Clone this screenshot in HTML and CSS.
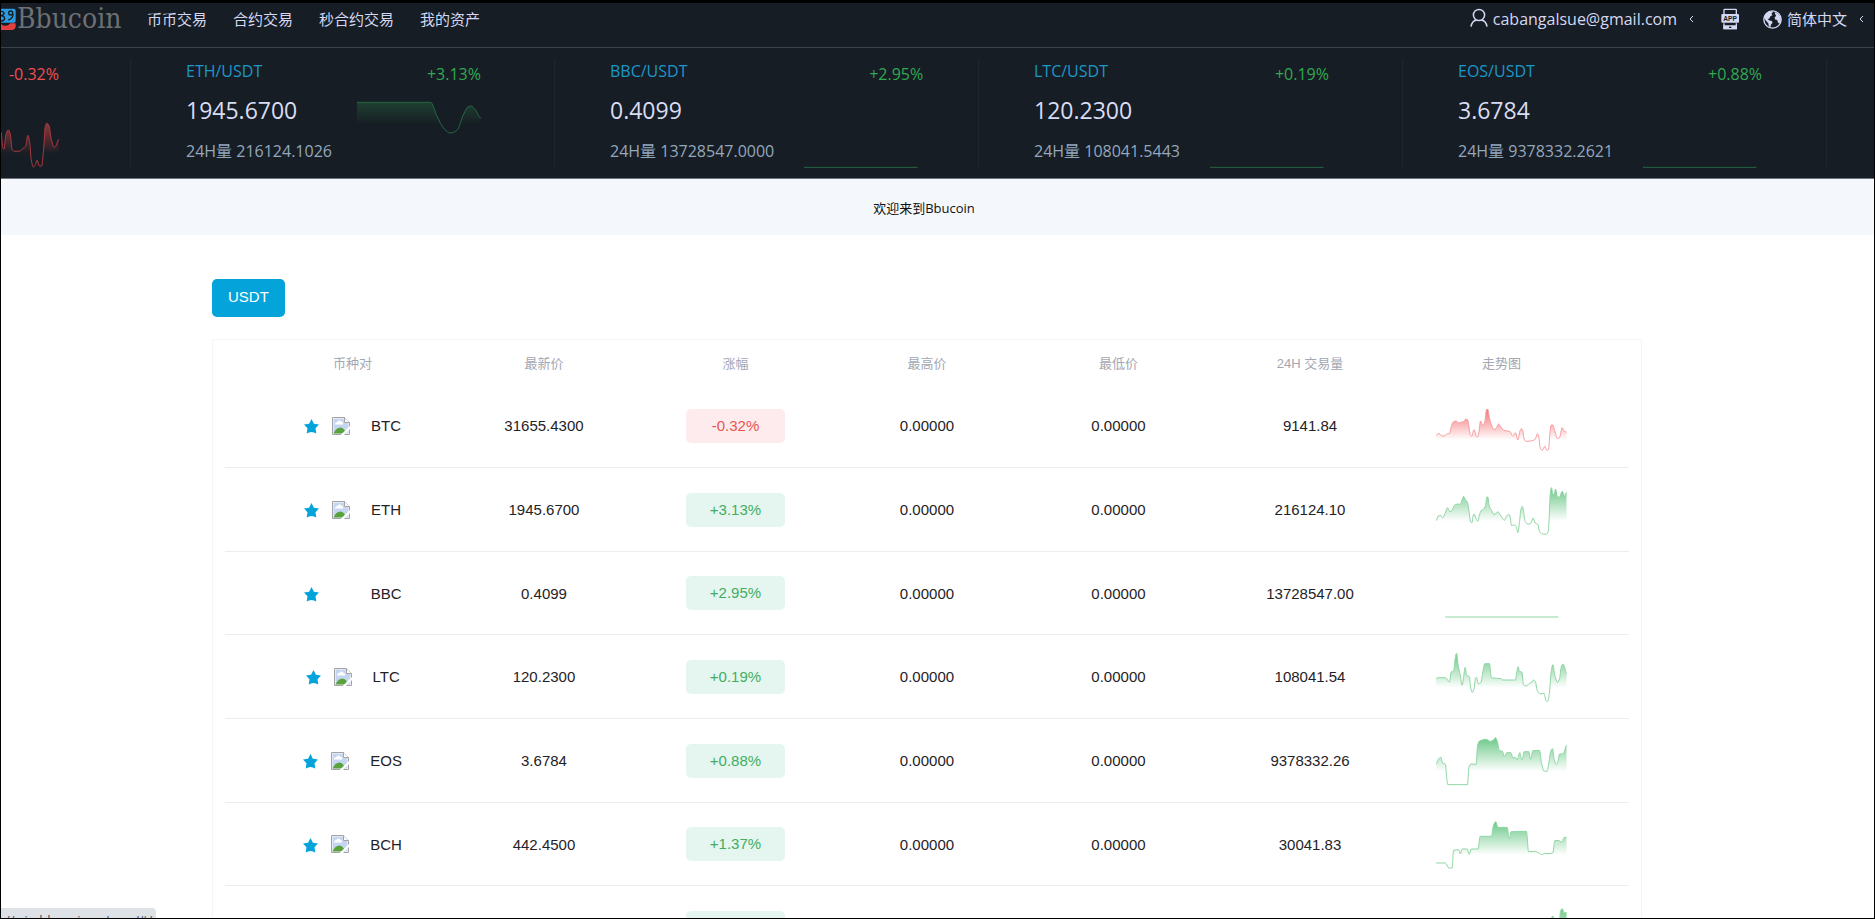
FILE: index.html
```html
<!DOCTYPE html>
<html lang="zh-CN">
<head>
<meta charset="utf-8">
<title>Bbucoin</title>
<link rel="stylesheet" href="styles.css">
</head>
<body>
<div class="page">
  <header class="topbar">
    <a class="brand" href="#">
      <svg class="brand-mark" viewBox="0 0 45 66" aria-hidden="true">
        <path d="M0 2H38Q44 2 44 9V38Q44 44 38 44H0Z" fill="#2a9be0"/>
        <path d="M0 10Q9 10 9 16Q9 22 0 23Q11 25 11 32Q10 39 0 39" fill="none" stroke="#171d24" stroke-width="4"/>
        <circle cx="29" cy="15" r="6" fill="none" stroke="#171d24" stroke-width="4"/>
        <path d="M36 18Q37 31 22 36" fill="none" stroke="#171d24" stroke-width="4"/>
        <path d="M0 48Q16 60 28 46H44V56Q42 66 30 66H0Z" fill="#e2403f"/>
      </svg>
      <span class="brand-name">Bbucoin</span>
    </a>
    <nav class="menu">
      <a href="#">币币交易</a>
      <a href="#">合约交易</a>
      <a href="#">秒合约交易</a>
      <a href="#">我的资产</a>
    </nav>
    <div class="tools">
      <a class="account" href="#">
        <svg class="icon-user" viewBox="0 0 18 20" fill="none" stroke="currentColor" stroke-width="1.5" aria-hidden="true">
          <circle cx="9" cy="7" r="5.6"/><path d="M1 18.6Q2 12.8 6.6 12M17 18.6Q16 12.8 11.4 12"/>
        </svg>
        <span class="email">cabangalsue@gmail.com</span>
        <svg class="caret" viewBox="0 0 5 8" fill="none" stroke="currentColor" aria-hidden="true"><path d="M4 1L1 4L4 7"/></svg>
      </a>
      <a class="app" href="#" aria-label="APP">
        <svg class="icon-app" viewBox="0 0 54 66" aria-hidden="true">
          <path d="M9 18V6Q9 4 11 4H44Q46 4 46 6V18" fill="none" stroke="#d4d8f2" stroke-width="4"/>
          <path d="M9 46V62H46V46" fill="none" stroke="#d4d8f2" stroke-width="4"/>
          <path d="M7 52H48V62Q48 64 46 64H9Q7 64 7 62Z" fill="#d4d8f2"/>
          <rect x="1" y="18" width="53" height="26" rx="3" fill="#d4d8f2"/>
          <text x="27" y="38" text-anchor="middle" class="app-label">APP</text>
          <rect x="24" y="56" width="7" height="4" fill="#171d24"/>
        </svg>
      </a>
      <a class="lang" href="#">
        <svg class="icon-globe" viewBox="0 0 18 18" aria-hidden="true">
          <circle cx="9" cy="9" r="8.2" fill="#171d24" stroke="#d4d8f2" stroke-width="1.3"/>
          <path d="M2 4.5Q4 1.500 8 1L9.500 2L8 3.500L9 5L7 6L6 8L4.500 8.500L6 10L8.500 10.500L9 12L7.500 14L7 16.500Q5 15.500 5 12.500L3 10.500L1.500 8ZM11 2Q15 3 16.500 6.500L17 10L15.500 13L14 11.500L13.500 9.500L11.500 9L11 7L12.500 5.500L11.500 4Z" fill="#d4d8f2"/>
        </svg>
        <span>简体中文</span>
        <svg class="caret" viewBox="0 0 5 8" fill="none" stroke="currentColor" aria-hidden="true"><path d="M4 1L1 4L4 7"/></svg>
      </a>
    </div>
  </header>

  <section class="ticker">
    <article class="tick tick-first">
      <div class="tick-side"><span class="pct down">-0.32%</span><svg class="tick-chart" data-series="tickBtc" data-tone="down-dark" viewBox="0 0 177 210"></svg></div>
    </article>
    <article class="tick">
      <div class="tick-info"><span class="pair">ETH/USDT</span><strong class="last">1945.6700</strong><span class="vol">24H量 216124.1026</span></div>
      <div class="tick-side"><span class="pct">+3.13%</span><svg class="tick-chart" data-series="tickEth" data-tone="up-dark" viewBox="0 0 372 210"></svg></div>
    </article>
    <article class="tick">
      <div class="tick-info"><span class="pair">BBC/USDT</span><strong class="last">0.4099</strong><span class="vol">24H量 13728547.0000</span></div>
      <div class="tick-side"><span class="pct">+2.95%</span><svg class="tick-chart" data-series="tickFlat" data-tone="up-dark" viewBox="0 0 372 210"></svg></div>
    </article>
    <article class="tick">
      <div class="tick-info"><span class="pair">LTC/USDT</span><strong class="last">120.2300</strong><span class="vol">24H量 108041.5443</span></div>
      <div class="tick-side"><span class="pct">+0.19%</span><svg class="tick-chart" data-series="tickFlat" data-tone="up-dark" viewBox="0 0 372 210"></svg></div>
    </article>
    <article class="tick">
      <div class="tick-info"><span class="pair">EOS/USDT</span><strong class="last">3.6784</strong><span class="vol">24H量 9378332.2621</span></div>
      <div class="tick-side"><span class="pct">+0.88%</span><svg class="tick-chart" data-series="tickFlat" data-tone="up-dark" viewBox="0 0 372 210"></svg></div>
    </article>
  </section>

  <p class="notice">欢迎来到Bbucoin</p>

  <main class="market">
    <button class="tab" type="button">USDT</button>
    <div class="panel">
      <table class="coins">
        <colgroup><col class="col-edge"><col class="col"><col class="col"><col class="col"><col class="col"><col class="col"><col class="col-edge"></colgroup>
        <thead>
          <tr><th>币种对</th><th>最新价</th><th>涨幅</th><th>最高价</th><th>最低价</th><th>24H 交易量</th><th>走势图</th></tr>
        </thead>
        <tbody id="rows"></tbody>
      </table>
    </div>
  </main>
  <div class="status">//win.bbucoin.cc/wap/#/</div>
</div>

<svg class="defs" aria-hidden="true">
  <defs>
    <symbol id="star" viewBox="0 0 15 15"><path d="M7.500 0L9.900 4.700L15 5.500L11.500 9.200L12.300 14.600Q7.500 11.600 2.700 14.600L3.500 9.200L0 5.500L5.100 4.700Z" fill="#04a4da"/></symbol>
    <symbol id="broken" viewBox="0 0 18 18">
      <path d="M.5 .5H12.500L17.500 5.500V17.500H.5Z" fill="#fff" stroke="#a3a3a3"/>
      <path d="M1.500 1.500H12V6H16.500V16.500H1.500Z" fill="#c6d6f2"/>
      <path d="M3 7.500Q3 5 5.500 5Q7 2.500 9 4.500Q11.500 5 11 7.500Z" fill="#fff"/>
      <path d="M1.500 16.500Q4 10.500 8.500 10.500Q12.500 11 14 16.500Z" fill="#5aa33c"/>
      <path d="M12.500 .5V5.500H17.500" fill="#fff" stroke="#a3a3a3"/>
      <path d="M8.500 18L18 9V12L12 18Z" fill="#fff"/>
    </symbol>
    <linearGradient id="g-up" x1="0" y1="0" x2="0" y2="1"><stop offset="0" stop-color="#6cc888"/><stop offset="0.72" stop-color="#6cc888" stop-opacity="0"/></linearGradient>
    <linearGradient id="g-down" x1="0" y1="0" x2="0" y2="1"><stop offset="0" stop-color="#f57478"/><stop offset="0.75" stop-color="#f57478" stop-opacity="0"/></linearGradient>
    <linearGradient id="g-up-dark" x1="0" y1="0" x2="0" y2="1"><stop offset="0" stop-color="#2f9350" stop-opacity="0.3"/><stop offset="0.72" stop-color="#2f9350" stop-opacity="0"/></linearGradient>
    <linearGradient id="g-down-dark" x1="0" y1="0" x2="0" y2="1"><stop offset="0" stop-color="#e04848" stop-opacity="0.6"/><stop offset="0.7" stop-color="#e04848" stop-opacity="0"/></linearGradient>
  </defs>
</svg>
<script src="script.js"></script>
</body>
</html>
```
FILE: styles.css
```css
* { box-sizing: border-box; }

body {
  margin: 0;
  background: #000;
  font-family: "Liberation Sans", "Noto Sans CJK SC", sans-serif;
  font-size: 15px;
  color: #1f2226;
}

a { color: inherit; text-decoration: none; }
svg { display: block; flex: none; }
.defs { position: absolute; width: 0; height: 0; }

.page {
  position: relative;
  height: 100vh;
  overflow: hidden;
  border: 1px solid #000;
  border-top-width: 3px;
  background: #fff;
}

.topbar {
  display: flex;
  align-items: flex-start;
  height: 45px;
  background: #171d24;
  border-bottom: 1px solid #3b424b;
  color: #d4d8f2;
  font-family: "Open Sans", "Noto Sans CJK SC", sans-serif;
  line-height: 32px;
}

.brand { display: flex; align-items: center; gap: 1px; width: 123px; height: 32px; }
.brand-mark { width: 15px; height: 22px; }
.brand-name {
  font-family: "DejaVu Serif Condensed", "DejaVu Serif", serif;
  font-size: 28px;
  color: #6d7074;
}

.menu { display: flex; gap: 26px; margin-left: 23px; }

.tools { display: flex; margin-left: auto; padding-right: 10px; }
.account, .lang { display: flex; align-items: center; height: 32px; gap: 5px; }
.email { font-size: 16px; }
.caret { width: 5px; height: 8px; margin-left: 7px; }
.icon-user { width: 18px; height: 20px; margin-bottom: 2px; }
.app { display: flex; align-items: center; height: 32px; margin: 0 24px 0 27px; }
.icon-app { width: 18px; height: 22px; }
.app-label { font-family: "Liberation Sans", sans-serif; font-size: 20px; font-weight: 700; fill: #171d24; }
.icon-globe { width: 19px; height: 19px; }

.ticker {
  display: flex;
  overflow: hidden;
  padding: 11px 0;
  background: #171d24;
  border-bottom: 1px solid #6d7278;
  font-family: "Open Sans", "Noto Sans CJK SC", sans-serif;
  font-size: 16px;
}
.tick {
  display: flex;
  flex: none;
  gap: 25px;
  width: 424px;
  height: 108px;
  padding-left: 55px;
  border-right: 1px solid #20262d;
}
.tick-first { width: 130px; padding-left: 0; }
.tick-info { display: flex; flex-direction: column; white-space: nowrap; }
.pair { line-height: 24px; color: #1b97c8; }
.last { font-size: 23px; font-weight: 400; line-height: 54px; color: #d9dcf5; }
.vol { line-height: 28px; color: #93a7bd; }
.tick-side { display: flex; flex-direction: column; }
.pct { align-self: flex-end; line-height: 30px; margin-bottom: 10px; color: #31a852; }
.pct.down { color: #f24e50; }
.tick-chart { width: 124px; height: 70px; }
.tick-first .tick-chart { width: 58px; }

.notice {
  margin: 0;
  padding: 2px 27px 0 0;
  background: #f4f8fc;
  font-family: "Open Sans", "Noto Sans CJK SC", sans-serif;
  font-size: 13px;
  line-height: 54px;
  text-align: center;
  color: #111;
}

.market { padding: 44px 232px 0 211px; }
.tab {
  display: block;
  height: 38px;
  padding: 0 16px 3px;
  border: 0;
  border-radius: 5px;
  background: #04a4da;
  font: inherit;
  color: #fff;
}
.panel { margin-top: 22px; padding: 0 12px; border: 1px solid #f4f5f7; }

.coins { width: 100%; table-layout: fixed; border-collapse: separate; border-spacing: 0; }
.col-edge { width: 15.9%; }
.coins th { height: 44px; padding: 1px 0 0; font-size: 13px; font-weight: 400; color: #a3a7b4; }
.coins td { height: 84px; padding: 0; border-bottom: 1px solid #ebedef; text-align: center; }
.coins tr:nth-child(3n) td { height: 83px; }
.coins th:first-child, .coins td:first-child { padding-left: 32px; }
.coins th:last-child, .coins td:last-child { padding-right: 32px; }

.coin { display: flex; align-items: center; justify-content: center; }
.star { width: 15px; height: 15px; margin: 2px 13px 0 0; }
.logo { width: 18px; height: 18px; margin-right: 21px; }
.pill {
  display: block;
  width: 99px;
  margin: 0 auto;
  min-height: 34px;
  border-radius: 5px;
  background: #e5f6f0;
  line-height: 34px;
  color: #42ad62;
}
.pill.down { background: #feebed; color: #e95450; }
.spark { width: 131px; height: 50px; margin: 0 auto; }

.status {
  position: absolute;
  left: 0;
  bottom: 0;
  height: 10px;
  padding: 0 4px;
  overflow: hidden;
  border-radius: 0 4px 0 0;
  background: #dee1e6;
  font-family: "Open Sans", sans-serif;
  font-size: 13px;
  line-height: 24px;
  color: #4c5156;
}
```
FILE: script.js
```js
// Chart points as x,y pairs; y grows downwards.
const series = {
  BTC: "0,102 8,97 16,104 24,105 34,98 41,96 46,75 52,62 60,60 68,66 76,63 82,62 88,55 94,56 98,75 102,100 107,106 112,88 114,86 120,106 124,108 128,95 133,60 140,74 146,62 151,26 155,25 160,52 166,72 173,86 180,82 187,69 194,78 204,88 214,90 222,92 230,106 238,95 245,117 252,88 256,83 260,90 264,115 270,121 285,120 297,115 304,98 308,108 312,140 318,148 326,136 332,148 337,146 341,100 345,72 350,72 356,90 363,112 370,110 378,80 383,90 391,93",
  ETH: "0,107 6,93 12,91 20,98 27,85 34,68 41,80 48,76 54,62 60,58 66,57 72,58 78,44 82,34 88,44 94,52 98,75 103,110 107,114 111,92 114,87 119,100 125,109 130,90 134,78 142,73 148,62 152,36 155,36 159,62 166,76 173,88 179,87 185,80 190,86 197,97 205,106 210,95 218,88 222,96 226,122 232,120 240,124 245,143 250,110 254,75 258,64 263,85 267,110 276,117 284,115 291,99 297,114 305,118 310,140 316,146 330,148 336,140 339,100 342,30 346,8 350,28 354,28 358,12 364,36 370,36 378,19 386,34 391,22",
  BBC: "27,147 367,147",
  LTC: "0,82 4,77 28,77 40,90 45,60 53,56 57,20 61,4 66,40 72,68 78,100 83,70 87,46 91,68 100,75 103,105 108,121 114,110 118,78 121,76 127,96 134,92 140,60 146,35 160,35 165,75 170,78 194,80 200,84 238,84 242,60 246,44 250,58 257,60 262,98 270,102 280,94 288,90 292,84 298,90 303,115 312,126 324,124 329,146 335,148 340,120 345,60 350,38 356,70 364,91 370,80 376,42 381,36 386,48 391,65",
  EOS: "0,84 4,74 10,66 14,64 19,80 28,85 31,120 35,146 94,146 98,95 104,84 120,85 124,30 130,15 150,10 162,16 172,12 178,5 184,18 190,44 199,46 204,62 212,50 224,50 230,66 238,64 243,72 251,50 256,70 258,72 264,47 278,47 283,70 290,44 310,43 316,80 323,105 333,106 338,80 344,45 349,38 354,70 361,86 366,75 370,54 378,54 384,48 391,28",
  BCH: "0,132 28,132 38,147 48,147 52,94 68,92 73,105 78,90 93,90 99,106 105,90 126,90 132,52 166,52 172,18 179,8 185,25 213,25 219,60 225,38 271,37 277,98 296,97 308,102 318,107 326,103 333,104 350,102 356,65 366,64 378,70 383,56 391,55",
  NEXT: "0,130 330,140 340,100 346,45 350,39 355,60 368,80 373,25 378,17 384,30 391,28",
  tickBtc: "0,100 5,143 9,151 15,108 22,93 28,103 34,153 42,158 57,157 67,149 75,143 82,109 88,133 92,183 99,206 105,198 110,185 117,203 124,203 130,153 135,83 140,72 147,81 153,118 162,146 169,138 176,121",
  tickEth: "0,10 221,10 240,52 262,90 280,102 300,94 320,45 333,24 343,21 355,32 371,57",
  tickFlat: "15,205 355,205"
};

const tones = {
  "up": ["#8fd6a4", "g-up"],
  "down": ["#f79da0", "g-down"],
  "up-dark": ["#256843", "g-up-dark"],
  "down-dark": ["#a83a40", "g-down-dark"]
};

// Monotone cubic curve through the points.
function curve(points) {
  const n = points.length;
  const slope = points.slice(1).map((p, i) => (p[1] - points[i][1]) / (p[0] - points[i][0]));
  const tangent = points.map((p, i) => {
    const a = slope[i - 1], b = slope[i];
    return i === 0 || i === n - 1 || a * b <= 0 ? 0 : 2 * a * b / (a + b);
  });
  let d = `M${points[0]}`;
  for (let i = 1; i < n; i++) {
    const [x0, y0] = points[i - 1], [x1, y1] = points[i], h = (x1 - x0) / 3;
    d += `C${x0 + h},${y0 + tangent[i - 1] * h} ${x1 - h},${y1 - tangent[i] * h} ${x1},${y1}`;
  }
  return d;
}

function chart(name, tone) {
  const points = series[name].split(" ").map(p => p.split(",").map(Number));
  const bottom = Math.max(...points.map(p => p[1]));
  const d = curve(points);
  const [stroke, fill] = tones[tone];
  const area = points.length > 2
    ? `<path d="${d}L${points[points.length - 1][0]},${bottom}L${points[0][0]},${bottom}Z" fill="url(#${fill})"/>` : "";
  return `${area}<path d="${d}" fill="none" stroke="${stroke}" stroke-width="3"/>`;
}

const coins = [
  ["BTC", "31655.4300", "-0.32%", "9141.84"],
  ["ETH", "1945.6700", "+3.13%", "216124.10"],
  ["BBC", "0.4099", "+2.95%", "13728547.00"],
  ["LTC", "120.2300", "+0.19%", "108041.54"],
  ["EOS", "3.6784", "+0.88%", "9378332.26"],
  ["BCH", "442.4500", "+1.37%", "30041.83"]
];

const spark = (name, tone) => `<svg class="spark" viewBox="0 0 392 150">${chart(name, tone)}</svg>`;

document.getElementById("rows").innerHTML = coins.map(([name, price, pct, volume]) => {
  const tone = pct[0] === "-" ? "down" : "up";
  const logo = name === "BBC" ? "" : '<use href="#broken"/>';
  return `<tr>
    <td><div class="coin"><svg class="star"><use href="#star"/></svg><svg class="logo">${logo}</svg><span>${name}</span></div></td>
    <td>${price}</td>
    <td><span class="pill ${tone}">${pct}</span></td>
    <td>0.00000</td><td>0.00000</td>
    <td>${volume}</td>
    <td>${spark(name, tone)}</td>
  </tr>`;
}).join("") + `<tr><td></td><td></td><td><span class="pill"></span></td><td></td><td></td><td></td><td>${spark("NEXT", "up")}</td></tr>`;

document.querySelectorAll("[data-series]").forEach(el => {
  el.innerHTML = chart(el.dataset.series, el.dataset.tone);
});
```
